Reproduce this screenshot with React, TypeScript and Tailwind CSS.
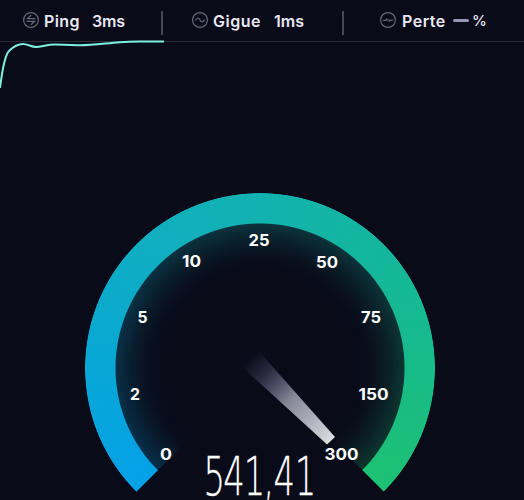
import type { ReactNode } from "react"

interface StatProps {
        label: string,
        labelClass: string,
        icon: ReactNode,
        children: ReactNode
}

const Stat = (props: StatProps) => {
        return <div className="flex items-center h-[42px] text-[#e9e9f4]">
                <svg viewBox="0 0 16 16" className="w-4 h-4 shrink-0 -mt-0.5" fill="none" stroke="#686979" strokeWidth="1.2">
                        <circle cx="8" cy="8" r="7.4" />
                        {props.icon}
                </svg>
                <div className={props.labelClass}>{props.label}</div>
                {props.children}
        </div>
}

const Divider = () => <div className="w-0.5 h-6 mt-[11px] bg-[#474857]" />

const ticks = [
        { label: "0", x: 166, y: 460, w: 12 },
        { label: "2", x: 135, y: 400, w: 10 },
        { label: "5", x: 142.5, y: 323, w: 10 },
        { label: "10", x: 191.5, y: 267, w: 19 },
        { label: "25", x: 259, y: 246, w: 21 },
        { label: "50", x: 327, y: 268, w: 22 },
        { label: "75", x: 371, y: 323, w: 20 },
        { label: "150", x: 373.5, y: 400, w: 30 },
        { label: "300", x: 341.5, y: 460, w: 34 },
]

const Header = () => {
        return <div className="flex h-[42px] border-b border-[#2b2c39] font-['Inter',sans-serif] text-[16px] font-semibold whitespace-nowrap">
                <div className="w-[161px] pl-[23px]">
                        <Stat label="Ping" labelClass="ml-[5px] w-12 tracking-[0.4px]" icon={
                                <path d="M12.3 6.6H4.4L8.2 3.2M3.7 9.4h7.9L7.8 12.8" />
                        }>
                                <div className="tracking-[-0.2px]">3ms</div>
                        </Stat>
                </div>
                <Divider />
                <div className="w-[179px] pl-[29px]">
                        <Stat label="Gigue" labelClass="ml-[5px] w-[61px] tracking-[0.5px]" icon={
                                <path d="M3.5 8.5C5 5 6.5 5.5 8 8s3 3 4.5-.5" />
                        }>
                                <div className="tracking-[0px]">1ms</div>
                        </Stat>
                </div>
                <Divider />
                <div className="pl-9">
                        <Stat label="Perte" labelClass="ml-1.5 w-[51px] tracking-[0.5px]" icon={
                                <path d="M3 8.3h3l1-1.8M9 9.8l1-1.7h3M7.2 8.2h1.7" />
                        }>
                                <div className="w-4 h-[3px] -mt-0.5 rounded-full bg-[#9996b5]" />
                                <div className="ml-[3px] text-[15px] font-medium">%</div>
                        </Stat>
                </div>
        </div>
}

const Gauge = () => {
        return <svg viewBox="0 0 524 500" className="absolute left-0 top-0 w-[524px] h-[500px]">
                <defs>
                        <linearGradient id="needle" gradientUnits="userSpaceOnUse" x1="250" y1="357" x2="331" y2="441">
                                <stop offset="0" stopColor="#77789a" stopOpacity="0" />
                                <stop offset="0.2" stopColor="#77789a" stopOpacity="0.3" />
                                <stop offset="0.5" stopColor="#9c9cad" stopOpacity="0.85" />
                                <stop offset="1" stopColor="#dddde2" />
                        </linearGradient>
                </defs>
                <path d="M0 88C2 72 5 55 9 51S18 44 23 44S31 47 36 47S47 44.5 55 44.5S68 45.5 80 45.3S104 43.5 120 42.2S142 42 164 41.4" fill="none" stroke="#7ff0df" strokeWidth="2" />
                <path d="M241 366L256 348L335 437L327 444.5Z" fill="url(#needle)" />
                <g fill="#fff" className="font-['Inter',sans-serif] text-[16.5px] font-bold">
                        {ticks.map(t => <text key={t.label} x={t.x - (t.w / 2)} y={t.y} textLength={t.w} lengthAdjust="spacingAndGlyphs">{t.label}</text>)}
                </g>
                {/* narrow digits, so every glyph gets its own advance */}
                <text
                        transform="translate(203.5 495) scale(.64 1)"
                        dx="0 -3 -1.5 -3 -1 -0.5"
                        fill="#fff"
                        stroke="#fff"
                        strokeWidth="0.25"
                        className="font-['DejaVu_Sans',sans-serif] text-[53px] font-extralight"
                >541,41</text>
        </svg>
}

export default function App() {
        return <div className="relative w-[524px] h-[500px] overflow-hidden bg-[#090b19]">
                <Header />
                <div className="mt-[151px] ml-[84.5px] w-[350px] h-[350px] bg-[conic-gradient(from_224.8deg,transparent_0deg,#04a1e8_0.3deg,#08a8d4_50deg,#10aec0_95deg,#12b2b0_135deg,#14b69c_180deg,#17bb88_225deg,#1dc173_270deg,transparent_270.3deg)] [mask-image:radial-gradient(circle_at_center,transparent_98px,rgba(0,0,0,0.03)_112px,rgba(0,0,0,0.12)_128px,rgba(0,0,0,0.24)_144px,black_145px,black_174.5px,transparent_175.2px)]" />
                <Gauge />
        </div>
}
